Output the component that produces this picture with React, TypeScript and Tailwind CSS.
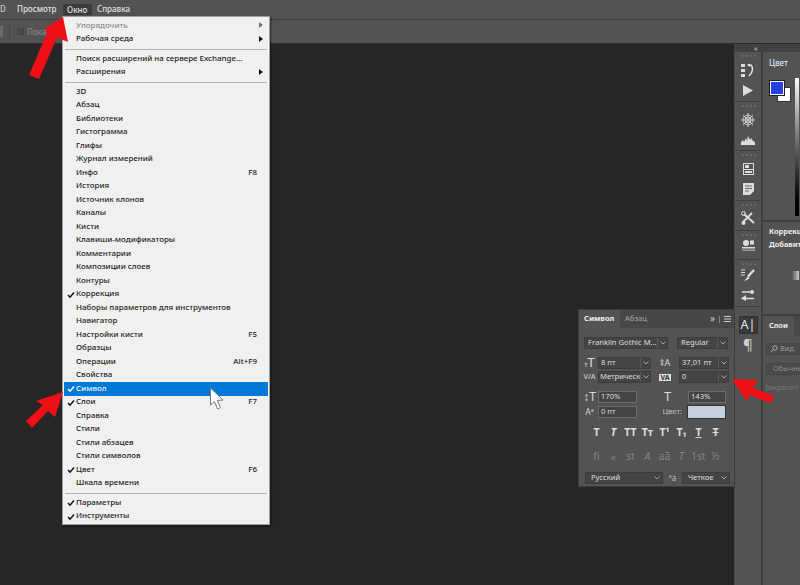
import type { ReactNode } from "react";

type Row = { t: string; check?: boolean; key?: string; sub?: boolean; dim?: boolean; active?: boolean };

const rows1: Row[] = [
  { t: "Упорядочить", sub: true, dim: true },
  { t: "Рабочая среда", sub: true },
];
const rows2: Row[] = [
  { t: "Поиск расширений на сервере Exchange..." },
  { t: "Расширения", sub: true },
];
const rows3: Row[] = [
  { t: "3D" },
  { t: "Абзац" },
  { t: "Библиотеки" },
  { t: "Гистограмма" },
  { t: "Глифы" },
  { t: "Журнал измерений" },
  { t: "Инфо", key: "F8" },
  { t: "История" },
  { t: "Источник клонов" },
  { t: "Каналы" },
  { t: "Кисти" },
  { t: "Клавиши-модификаторы" },
  { t: "Комментарии" },
  { t: "Композиции слоев" },
  { t: "Контуры" },
  { t: "Коррекция", check: true },
  { t: "Наборы параметров для инструментов" },
  { t: "Навигатор" },
  { t: "Настройки кисти", key: "F5" },
  { t: "Образцы" },
  { t: "Операции", key: "Alt+F9" },
  { t: "Свойства" },
  { t: "Символ", check: true, active: true },
  { t: "Слои", check: true, key: "F7" },
  { t: "Справка" },
  { t: "Стили" },
  { t: "Стили абзацев" },
  { t: "Стили символов" },
  { t: "Цвет", check: true, key: "F6" },
  { t: "Шкала времени" },
];
const rows4: Row[] = [
  { t: "Параметры", check: true },
  { t: "Инструменты", check: true },
];

function MenuRow({ r }: { r: Row }) {
  return (
    <div
      className={`relative flex items-center h-[13.5px] mx-px pl-[12px] pr-[11px] text-[7.95px] font-medium leading-none ${
        r.active ? "bg-[#0078d7] text-[#eef6ff]" : r.dim ? "text-[#8a8a8a]" : "text-[#222]"
      }`}
    >
      {r.check && (
        <svg className="absolute left-[3px] top-[3px]" width="8" height="8" viewBox="0 0 8 8">
          <path d="M1 4 L3 6.2 L7 1.5" fill="none" stroke={r.active ? "#fff" : "#111"} strokeWidth="1.5" />
        </svg>
      )}
      <span className="flex-1 whitespace-nowrap">{r.t}</span>
      {r.key && <span>{r.key}</span>}
      {r.sub && (
        <svg className="absolute right-[5px] top-[3px]" width="4" height="6" viewBox="0 0 4 6">
          <path d="M0 0 L4 3 L0 6Z" fill={r.dim ? "#777" : "#111"} />
        </svg>
      )}
    </div>
  );
}

function Group({ rows }: { rows: Row[] }) {
  return (
    <div>
      {rows.map((r, i) => (
        <MenuRow key={i} r={r} />
      ))}
    </div>
  );
}

const Sep = () => <div className="h-px bg-[#b4b4b4] mx-[2px] my-[2.5px]" />;

function Sel({ w, t, pl = "pl-[2px]", noLine }: { w: string; t: string; pl?: string; noLine?: boolean }) {
  return (
    <div className={`flex items-center shrink-0 ${w} h-[12px] bg-[#444] border border-[#3c3c3c] text-[7.6px] text-[#dedede] leading-none`}>
      <span className={`flex-1 min-w-0 ${pl} whitespace-nowrap`}>{t}</span>
      <span className={`w-[10px] shrink-0 h-full flex items-center justify-center ${noLine ? "" : "border-l border-[#5a5a5a]"}`}>
        <svg width="6" height="4" viewBox="0 0 6 4"><path d="M0.5 0.5 L3 3 L5.5 0.5" fill="none" stroke="#bbb" strokeWidth="0.8" /></svg>
      </span>
    </div>
  );
}

function Field({ w, t }: { w: string; t: string }) {
  return (
    <div className={`flex items-center shrink-0 ${w} h-[12px] bg-[#444] border border-[#6c6c6c] pl-[2px] text-[7.6px] text-[#dedede] leading-none`}>{t}</div>
  );
}

function DockGroup({ children, pt, h }: { children: ReactNode; pt: string; h: string }) {
  return (
    <div className={`relative flex flex-col items-center ${pt} ${h} border-b border-[#3e3e3e]`}>
      <div className="absolute top-[3px] left-[7px] w-[14px] border-t-2 border-dotted border-[#686868]" />
      {children}
    </div>
  );
}

const Ic = ({ children }: { children: ReactNode }) => <div className="h-[20px] flex items-center justify-center">{children}</div>;

const serif = "font-['Liberation_Serif',serif]";

export default function App() {
  return (
    <div className="relative w-[800px] h-[585px] overflow-hidden bg-[#262626] flex flex-col font-['Roboto',sans-serif]">
      {/* Menu bar */}
      <div className="h-[20px] shrink-0 bg-[#535353] border-b border-[#3d3d3d] flex items-start text-[8px] font-medium text-[#e0e0e0] leading-none">
        <span className="w-[17px] pt-[5px] text-[#cfcfcf]">D</span>
        <span className="w-[46px] pt-[5px]">Просмотр</span>
        <span className="mt-[4px] w-[29px] h-[11px] pl-[4px] flex items-center bg-[#3c3c3c]">Окно</span>
        <span className="ml-[5px] pt-[5px]">Справка</span>
      </div>
      {/* Options bar */}
      <div className="h-[24px] shrink-0 bg-[#535353] border-b border-[#2c2c2c] flex items-center">
        <div className="w-[3px] h-[11px] bg-[#6b6b6b]" />
        <div className="ml-[6px] w-px h-[14px] bg-[#444]" />
        <div className="ml-[7px] w-[7px] h-[7px] bg-[#4a4a4a] border border-[#444]" />
        <span className="ml-[3px] text-[8px] text-[#8d8d8d]">Показ</span>
      </div>
      {/* Workspace */}
      <div className="flex-1 flex min-h-0">
        <div className="flex-1 bg-[#262626]" />
        <div className="w-[66px] shrink-0 flex flex-col bg-[#535353]">
          <div className="h-[8px] bg-[#414141] flex items-center pl-[20px] text-[7px] text-[#ccc] leading-none">«</div>
          <div className="flex-1 flex min-h-0">
            {/* icon column */}
            <div className="w-[29px] shrink-0 bg-[#535353] border-l border-[#4b4b4b] border-r-2 border-r-[#3e3e3e] flex flex-col">
              <DockGroup pt="pt-[8px]" h="h-[50px]">
                <Ic><svg width="17" height="13" viewBox="0 0 17 13"><rect x="1" y="0" width="4" height="3" fill="#ddd" /><rect x="1" y="5" width="4" height="3" fill="#ddd" /><rect x="1" y="10" width="4" height="3" fill="#ddd" /><path d="M8 1 h3 q4 5 -2 11" fill="none" stroke="#ddd" strokeWidth="1.6" /><path d="M7 1 L10 -1 V3Z" fill="#ddd" /></svg></Ic>
                <Ic><svg width="12" height="11" viewBox="0 0 12 11"><path d="M1 0 L11 5.5 L1 11Z" fill="#ddd" /></svg></Ic>
              </DockGroup>
              <DockGroup pt="pt-[8px]" h="h-[49px]">
                <Ic><svg width="14" height="14" viewBox="0 0 14 14"><g stroke="#d8d8d8" strokeWidth="0.9" fill="none"><circle cx="7" cy="7" r="3" /><circle cx="7" cy="7" r="5" /><path d="M7 0 V14 M0 7 H14 M2 2 L12 12 M12 2 L2 12" /></g></svg></Ic>
                <Ic><svg width="14" height="9" viewBox="0 0 14 9"><path d="M0 9 V6 L2 4 L3 6 L5 2 L6 5 L7 0 L9 4 L10 2 L12 5 L14 6 V9Z" fill="#ddd" /></svg></Ic>
              </DockGroup>
              <DockGroup pt="pt-[8px]" h="h-[50px]">
                <Ic><svg width="11" height="12" viewBox="0 0 11 12"><rect x="0.5" y="0.5" width="10" height="11" fill="none" stroke="#ddd" /><rect x="2" y="2" width="4" height="3" fill="#ddd" /><path d="M1 6.5 H10" stroke="#ddd" /><rect x="2" y="8" width="7" height="2" fill="#ddd" /></svg></Ic>
                <Ic><svg width="11" height="12" viewBox="0 0 11 12"><path d="M0 0 H11 V8 L7 12 H0Z" fill="#ddd" /><path d="M2 3 H9 M2 5.5 H9 M2 8 H6" stroke="#666" /></svg></Ic>
              </DockGroup>
              <DockGroup pt="pt-[7px]" h="h-[30px]">
                <Ic><svg width="14" height="14" viewBox="0 0 14 14"><path d="M3 3 L13 12 M11 2 L2 11" stroke="#ddd" strokeWidth="1.8" /><circle cx="2.5" cy="2.5" r="2" fill="none" stroke="#ddd" /><circle cx="2.5" cy="12" r="2" fill="#ddd" /></svg></Ic>
              </DockGroup>
              <DockGroup pt="pt-[4px]" h="h-[29px]">
                <Ic><svg width="13" height="12" viewBox="0 0 13 12"><circle cx="4" cy="4" r="3" fill="#ddd" /><rect x="8" y="1.5" width="4" height="4" fill="#ddd" /><rect x="0" y="8" width="13" height="1.5" fill="#ddd" /><rect x="0" y="10.5" width="13" height="1.5" fill="#999" /></svg></Ic>
              </DockGroup>
              <DockGroup pt="pt-[5px]" h="h-[47px]">
                <Ic><svg width="14" height="13" viewBox="0 0 14 13"><path d="M0 1 H4 M0 3.5 H4 M0 6 H4" stroke="#ddd" /><path d="M13 1 L7 7.5" stroke="#ddd" strokeWidth="2.4" /><path d="M7 7 L3 12.5 L8.5 9.5Z" fill="#ddd" /></svg></Ic>
                <Ic><svg width="14" height="11" viewBox="0 0 14 11"><path d="M1 2 H9 M5 8.5 H13" stroke="#ddd" strokeWidth="1.4" /><circle cx="11" cy="2" r="2" fill="#ddd" /><path d="M0 8.5 L5 5 V11 Z" fill="#ddd" /></svg></Ic>
              </DockGroup>
              <div className="flex flex-col items-center pt-[9px] gap-[3px]">
                <div className="w-[19px] h-[18px] bg-[#3a3a3a] border border-[#2f2f2f] rounded-[1px] flex items-center justify-center text-[12.5px] text-[#e8e8e8] leading-none">A|</div>
                <span className="text-[15px] text-[#cfcfcf] leading-none font-['Liberation_Sans',sans-serif]">¶</span>
              </div>
            </div>
            {/* right panels */}
            <div className="flex-1 flex flex-col min-w-0 overflow-hidden">
              <div className="h-[170px] bg-[#535353] border-b-2 border-[#3e3e3e] flex flex-col">
                <div className="h-[26px] flex items-start pt-[7px] pl-[6px] text-[8px] text-[#dbe6ff] leading-none font-medium">Цвет</div>
                <div className="flex-1 relative">
                  <div className="absolute left-[14px] top-[9px] w-[14px] h-[15px] bg-white border border-[#333]" />
                  <div className="absolute left-[7px] top-[3px] w-[14px] h-[14px] bg-[#2340e0] border border-white outline outline-1 outline-[#222]" />
                  <div className="absolute left-[32px] top-0 w-[4px] h-[138px] bg-gradient-to-b from-white to-black" />
                </div>
              </div>
              <div className="h-[94px] bg-[#535353] border-b-2 border-[#3e3e3e] pl-[6px] text-[7.4px] text-[#ececec] leading-none font-bold whitespace-nowrap">
                <div className="pt-[6px] h-[17px]">Коррекц</div>
                <div className="pt-[2px] h-[12px]">Добавит</div>
                <div className="mt-[20px] ml-[23px] w-[7px] h-[9px] bg-gradient-to-r from-[#555] to-[#ccc]" />
              </div>
              <div className="flex-1 bg-[#535353] whitespace-nowrap text-[7.4px] leading-none">
                <div className="h-[20px] bg-[#474747] flex">
                  <div className="w-[31px] bg-[#535353] pl-[6px] flex items-center font-bold text-[#ececec]">Слои</div>
                </div>
                <div className="mt-[7px] ml-[3px] h-[12px] bg-[#4a4a4a] border border-[#474747] pl-[3px] gap-[2px] flex items-center text-[#999]">
                  <svg width="8" height="8" viewBox="0 0 8 8"><circle cx="5" cy="3" r="2.2" fill="none" stroke="#aaa" /><path d="M3.4 4.6 L0.8 7.2" stroke="#aaa" /></svg>
                  Вид
                </div>
                <div className="mt-[8px] ml-[3px] h-[12px] bg-[#4a4a4a] border border-[#474747] pl-[6px] flex items-center text-[#8c8c8c]">Обычны</div>
                <div className="mt-[9px] pl-[2px] text-[#777]">Закрепит</div>
              </div>
            </div>
          </div>
        </div>
      </div>

      {/* Window menu */}
      <div className="absolute left-[62px] top-[16px] w-[208px] h-[509px] bg-[#f0f0f0] border border-[#a0a0a0] pt-[2px] shadow-[1px_1px_2px_rgba(0,0,0,0.5)]">
        <Group rows={rows1} />
        <Sep />
        <Group rows={rows2} />
        <Sep />
        <Group rows={rows3} />
        <Sep />
        <Group rows={rows4} />
      </div>

      {/* Cursor */}
      <svg className="absolute left-[209px] top-[387px]" width="16" height="24" viewBox="0 0 16 24">
        <path d="M1.5 1 L1.5 18 L5.5 14.5 L8.5 22 L11.5 20.5 L8.5 13.5 L14 13Z" fill="#fff" stroke="#777" strokeWidth="1" />
      </svg>

      {/* Character panel */}
      <div className="absolute left-[578px] top-[309px] w-[157px] h-[178px] bg-[#535353] border border-[#3c3c3c] text-[#dcdcdc] leading-none">
        <div className="h-[18px] bg-[#474747] flex items-stretch text-[7.6px]">
          <div className="w-[41px] bg-[#535353] flex items-center pl-[5px] font-bold text-[#f0f0f0]">Символ</div>
          <div className="flex items-center pl-[5px] text-[#a5a5a5]">Абзац</div>
          <div className="flex-1" />
          <div className="flex items-center pr-[3px] text-[#ccc] gap-[4px]">
            <span className="text-[10px] -mt-[2px]">»</span>
            <span className="w-px h-[7px] bg-[#888]" />
            <svg width="7" height="6" viewBox="0 0 7 6"><path d="M0 0.5 H7 M0 3 H7 M0 5.5 H7" stroke="#ccc" /></svg>
          </div>
        </div>
        <div className="flex pl-[5px] pt-[9px]">
          <Sel w="w-[84px]" t="Franklin Gothic M..." pl="pl-[3px]" />
          <div className="w-[9px]" />
          <Sel w="w-[51px]" t="Regular" pl="pl-[3px]" />
        </div>
        <div className="flex pl-[2px] pt-[7px] items-center">
          <span className={`w-[17px] ${serif} text-[13px] text-center`}><span className="text-[7px]">т</span>T</span>
          <Sel w="w-[53px]" t="8 пт" />
          <span className={`w-[28px] ${serif} text-[9px] text-center`}>‡A</span>
          <Sel w="w-[50px]" t="37,01 пт" />
        </div>
        <div className="flex pl-[2px] pt-[2px] items-center">
          <span className="w-[17px] text-[7.5px] text-center">V/A</span>
          <Sel w="w-[53px]" t="Метрическ" pl="pl-[1px]" />
          <span className="w-[28px] flex justify-center"><span className="bg-[#ddd] text-[#333] text-[7px] font-bold px-[1px]">VA</span></span>
          <Sel w="w-[50px]" t="0" />
        </div>
        <div className="flex pl-[2px] pt-[7px] items-center">
          <span className={`w-[17px] ${serif} text-[12px] text-center`}>↕T</span>
          <Field w="w-[39px]" t="170%" />
          <span className={`w-[51px] pl-[10px] ${serif} text-[13px] text-center`}>T</span>
          <Field w="w-[38px]" t="143%" />
        </div>
        <div className="flex pl-[2px] pt-[2px] items-center">
          <span className="w-[17px] text-[8px] text-center">Aª</span>
          <Field w="w-[39px]" t="0 пт" />
          <span className="w-[50px] text-right pr-[5px] text-[7.6px] text-[#c0c0c0]">Цвет:</span>
          <div className="w-[39px] h-[14px] bg-[#c5cfe0] border border-[#333]" />
        </div>
        <div className="flex pl-[9px] pt-[8px] font-bold">
          {["T", "T", "TT", "Tт", "T¹", "T₁", "T", "T"].map((t, i) => (
            <span key={i} className={`w-[17px] text-center ${serif} text-[10.5px] leading-none ${i === 1 ? "italic" : ""} ${i === 6 ? "underline" : ""} ${i === 7 ? "line-through" : ""}`}>{t}</span>
          ))}
        </div>
        <div className="flex pl-[9px] pt-[13px] text-[#858585]">
          {["ﬁ", "ℴ", "st", "A", "aā", "T", "1st", "½"].map((t, i) => (
            <span key={i} className={`w-[17px] text-center ${serif} text-[10.5px] leading-none ${i === 3 || i === 5 ? "italic" : ""}`}>{t}</span>
          ))}
        </div>
        <div className="flex pl-[6px] pt-[11px] items-center">
          <Sel w="w-[78px]" t="Русский" pl="pl-[5px]" noLine />
          <span className="w-[19px] text-[8px] text-center text-[#bbb]">ªa</span>
          <Sel w="w-[48px]" t="Четкое" pl="pl-[5px]" noLine />
        </div>
      </div>

      {/* Red arrows */}
      <svg className="absolute left-[25px] top-[14px]" width="50" height="70" viewBox="25 14 50 70">
        <path d="M63 17 L68 42 L57 37.5 L39 79 L29 75 L47 33 L45 28Z" fill="#ee0f17" />
      </svg>
      <svg className="absolute left-[24px] top-[390px]" width="42" height="40" viewBox="24 390 42 40">
        <path d="M63 392 L55 417 L48 411 L32 428 L26 421 L43 405 L36 401Z" fill="#ee0f17" />
      </svg>
      <svg className="absolute left-[730px] top-[378px]" width="48" height="27" viewBox="730 378 48 27">
        <path d="M732 379 L758 380 L753 388 L775 396 L770 403 L749 395 L747 402Z" fill="#ee0f17" />
      </svg>
    </div>
  );
}
